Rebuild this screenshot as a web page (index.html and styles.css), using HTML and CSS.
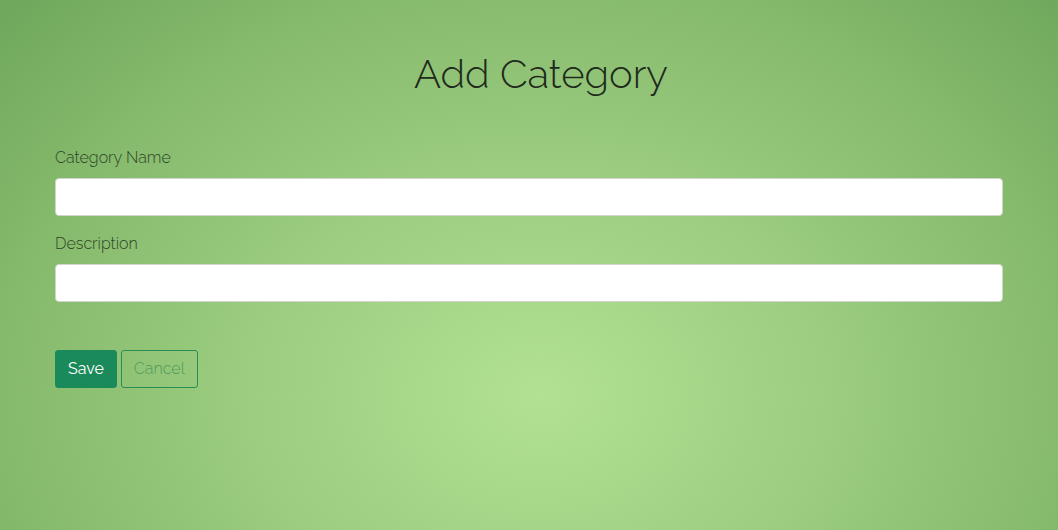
FILE: index.html
```html
<!DOCTYPE html>
<html lang="en">
<head>
<meta charset="utf-8">
<title>Add Category</title>
<link rel="stylesheet" href="styles.css">
</head>
<body>
<main class="page">
  <h1 class="title">Add Category</h1>
  <form class="form">
    <div class="field">
      <label class="label" for="name">Category Name</label>
      <input class="input" id="name" type="text">
    </div>
    <div class="field">
      <label class="label" for="desc">Description</label>
      <input class="input" id="desc" type="text">
    </div>
    <div class="actions">
      <button type="button" class="btn btn-save">Save</button>
      <button type="button" class="btn btn-cancel">Cancel</button>
    </div>
  </form>
</main>
</body>
</html>
```

FILE: styles.css
```css
html, body {
  margin: 0;
  height: 100%;
}
body {
  font-family: "Raleway", "Lato", "Open Sans", sans-serif;
  background: radial-gradient(ellipse 720px 560px at 540px 395px, #b2e192 0%, #9ccd80 40%, #85b96b 75%, #70a95d 100%);
  background-color: #70a95d;
  color: #2c3a29;
  overflow: hidden;
}
.page {
  padding: 50px 55px 0;
}
.title {
  margin: 0 0 48px;
  padding-left: 24px;
  font-size: 40px;
  font-weight: 300;
  line-height: 48px;
  text-align: center;
  color: #1f2a1d;
}
.form {
  display: flex;
  flex-direction: column;
}
.field {
  display: flex;
  flex-direction: column;
  margin-bottom: 16px;
}
.label {
  font-size: 16px;
  font-weight: 300;
  line-height: 24px;
  margin-bottom: 8px;
  color: #2c4527;
}
.input {
  height: 38px;
  box-sizing: border-box;
  border: 1px solid #cfd6cc;
  border-radius: 4px;
  background: #fff;
  padding: 6px 12px;
  font-size: 16px;
  font-family: inherit;
}
.actions {
  display: flex;
  gap: 4px;
  margin-top: 32px;
}
.btn {
  height: 38px;
  box-sizing: border-box;
  padding: 6px 12px;
  font-family: inherit;
  font-size: 16px;
  font-weight: 400;
  border-radius: 3px;
  line-height: 24px;
}
.btn-save {
  background: #1b8a5a;
  border: 1px solid #1b8a5a;
  color: #fff;
}
.btn-cancel {
  background: transparent;
  border: 1px solid #2b8c55;
  color: #4f9a5f;
  font-weight: 300;
}
```
